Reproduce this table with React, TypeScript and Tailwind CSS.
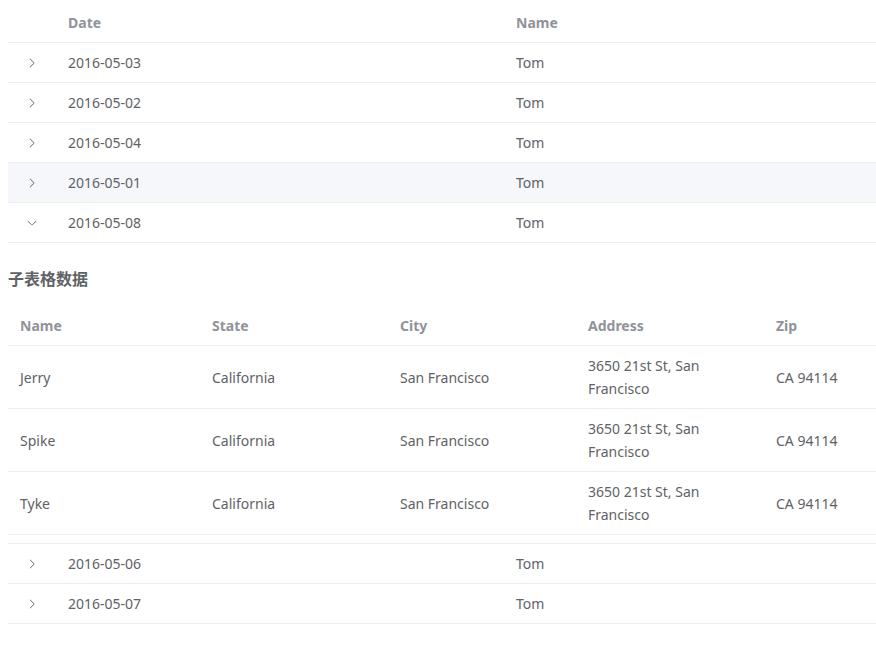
import React from "react";

const rowsTop = [
  { date: "2016-05-03", hover: false },
  { date: "2016-05-02", hover: false },
  { date: "2016-05-04", hover: false },
  { date: "2016-05-01", hover: true },
];

const rowsBottom = ["2016-05-06", "2016-05-07"];

const family = [
  { name: "Jerry" },
  { name: "Spike" },
  { name: "Tyke" },
];

function Arrow({ open }: { open?: boolean }) {
  return (
    <svg
      viewBox="0 0 1024 1024"
      className={open ? "w-3 h-3 rotate-90 text-[#606266]" : "w-3 h-3 text-[#606266]"}
      fill="currentColor"
    >
      <path d="M340.864 149.312a30.592 30.592 0 0 0 0 42.752L652.736 512 340.864 831.872a30.592 30.592 0 0 0 0 42.752 29.12 29.12 0 0 0 41.728 0L714.24 534.336a32 32 0 0 0 0-44.672L382.592 149.376a29.12 29.12 0 0 0-41.728 0z" />
    </svg>
  );
}

function OuterRow({ date, hover, open }: { date: string; hover?: boolean; open?: boolean }) {
  return (
    <div
      className={
        "grid grid-cols-[48px_448px_1fr] h-[40px] border-b border-[#ebeef5] items-center " +
        (hover ? "bg-[#f5f7fa]" : "bg-white")
      }
    >
      <div className="flex justify-center">
        <Arrow open={open} />
      </div>
      <div className="px-3 leading-[23px]">{date}</div>
      <div className="px-3 leading-[23px]">Tom</div>
    </div>
  );
}

export default function App() {
  return (
    <div
      className="bg-white min-h-screen pl-2 pt-[3px] text-sm text-[#606266]"
      style={{ fontFamily: '"Noto Sans", "Noto Sans CJK SC", sans-serif' }}
    >
      {/* header */}
      <div className="grid grid-cols-[48px_448px_1fr] h-[40px] border-b border-[#ebeef5] items-center font-bold text-[#909399]">
        <div />
        <div className="px-3 leading-[23px]">Date</div>
        <div className="px-3 leading-[23px]">Name</div>
      </div>

      {rowsTop.map((r) => (
        <OuterRow key={r.date} date={r.date} hover={r.hover} />
      ))}
      <OuterRow date="2016-05-08" open />

      {/* expanded */}
      <div className="border-b border-[#ebeef5] pb-2">
        <h3 className="pt-[25px] mb-[16px] text-base font-bold leading-[22px] text-[#606266]">
          子表格数据
        </h3>
        <div className="grid grid-cols-[192px_188px_188px_188px_1fr] h-[40px] border-b border-[#ebeef5] items-center font-bold text-[#909399]">
          <div className="px-3 leading-[23px]">Name</div>
          <div className="px-3 leading-[23px]">State</div>
          <div className="px-3 leading-[23px]">City</div>
          <div className="px-3 leading-[23px]">Address</div>
          <div className="px-3 leading-[23px]">Zip</div>
        </div>
        {family.map((f) => (
          <div
            key={f.name}
            className="grid grid-cols-[192px_188px_188px_188px_1fr] h-[63px] border-b border-[#ebeef5] items-center"
          >
            <div className="px-3 leading-[23px]">{f.name}</div>
            <div className="px-3 leading-[23px]">California</div>
            <div className="px-3 leading-[23px]">San Francisco</div>
            <div className="px-3 leading-[23px]">3650 21st St, San Francisco</div>
            <div className="px-3 leading-[23px]">CA 94114</div>
          </div>
        ))}
      </div>

      {rowsBottom.map((d) => (
        <OuterRow key={d} date={d} />
      ))}
    </div>
  );
}
